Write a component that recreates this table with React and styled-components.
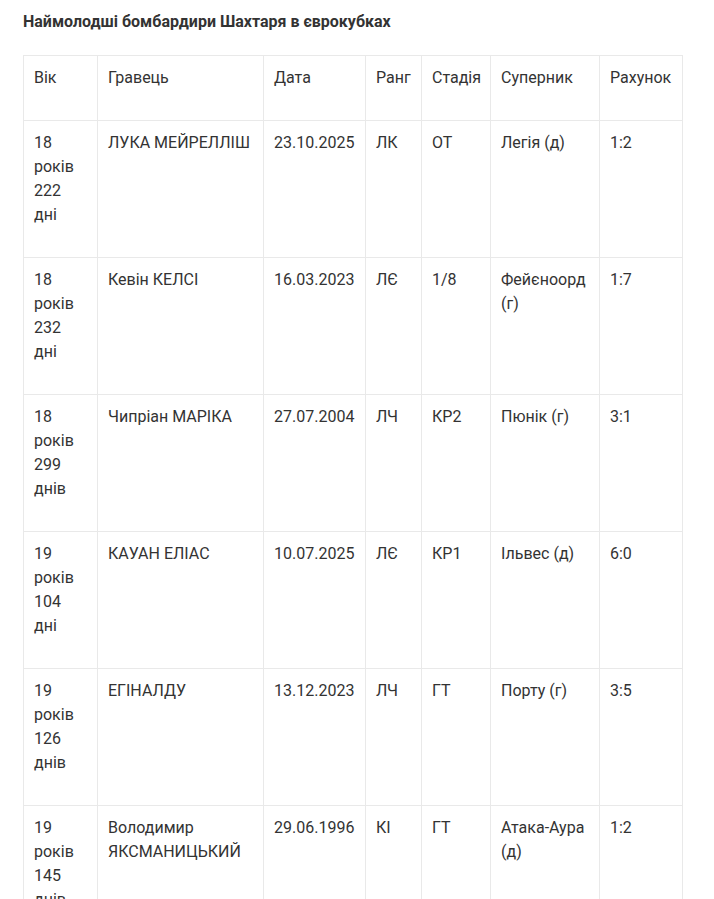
import styled, { createGlobalStyle } from "styled-components"

const rows = [
  ["18 років 222 дні", "ЛУКА МЕЙРЕЛЛІШ", "23.10.2025", "ЛК", "ОТ", "Легія (д)", "1:2"],
  ["18 років 232 дні", "Кевін КЕЛСІ", "16.03.2023", "ЛЄ", "1/8", "Фейєноорд (г)", "1:7"],
  ["18 років 299 днів", "Чипріан МАРІКА", "27.07.2004", "ЛЧ", "КР2", "Пюнік (г)", "3:1"],
  ["19 років 104 дні", "КАУАН ЕЛІАС", "10.07.2025", "ЛЄ", "КР1", "Ільвес (д)", "6:0"],
  ["19 років 126 днів", "ЕГІНАЛДУ", "13.12.2023", "ЛЧ", "ГТ", "Порту (г)", "3:5"],
  ["19 років 145 днів", "Володимир ЯКСМАНИЦЬКИЙ", "29.06.1996", "КІ", "ГТ", "Атака-Аура (д)", "1:2"],
]

const columns = [
  { title: "Вік", width: 74 },
  { title: "Гравець", width: 166 },
  { title: "Дата", width: 102 },
  { title: "Ранг", width: 56 },
  { title: "Стадія", width: 69 },
  { title: "Суперник", width: 109 },
  { title: "Рахунок", width: 83 },
]

export default function App() {
  return <>
    <GlobalStyle />
    <Page>
      <Title>Наймолодші бомбардири Шахтаря в єврокубках</Title>
      <Table>
        <colgroup>
          {columns.map((c) => <col key={c.title} style={{ width: c.width }} />)}
        </colgroup>
        <thead>
          <tr>
            {columns.map((c) => <Cell as="th" key={c.title}>{c.title}</Cell>)}
          </tr>
        </thead>
        <tbody>
          {rows.map((r, i) => (
            <tr key={i}>
              {r.map((v, j) => <Cell key={j}>{v}</Cell>)}
            </tr>
          ))}
        </tbody>
      </Table>
    </Page>
  </>
}

const GlobalStyle = createGlobalStyle`
  body {
    margin: 0;
    background: #fff;
    font-family: Roboto, "Noto Sans", sans-serif;
    color: #333;
  }
`

const Page = styled.div`
  padding: 10px 23px 0;
`

const Title = styled.h2`
  margin: 0 0 22px;
  font-size: 16px;
  line-height: 23px;
  font-weight: 700;
  color: #333;
`

const Table = styled.table`
  border-collapse: collapse;
  table-layout: fixed;
  width: 659px;
`

const Cell = styled.td`
  border: 1px solid #e9e9e9;
  padding: 10px 10px 30px 10px;
  font-size: 16px;
  line-height: 24px;
  font-weight: 400;
  text-align: left;
  vertical-align: top;
  color: #333;
`
